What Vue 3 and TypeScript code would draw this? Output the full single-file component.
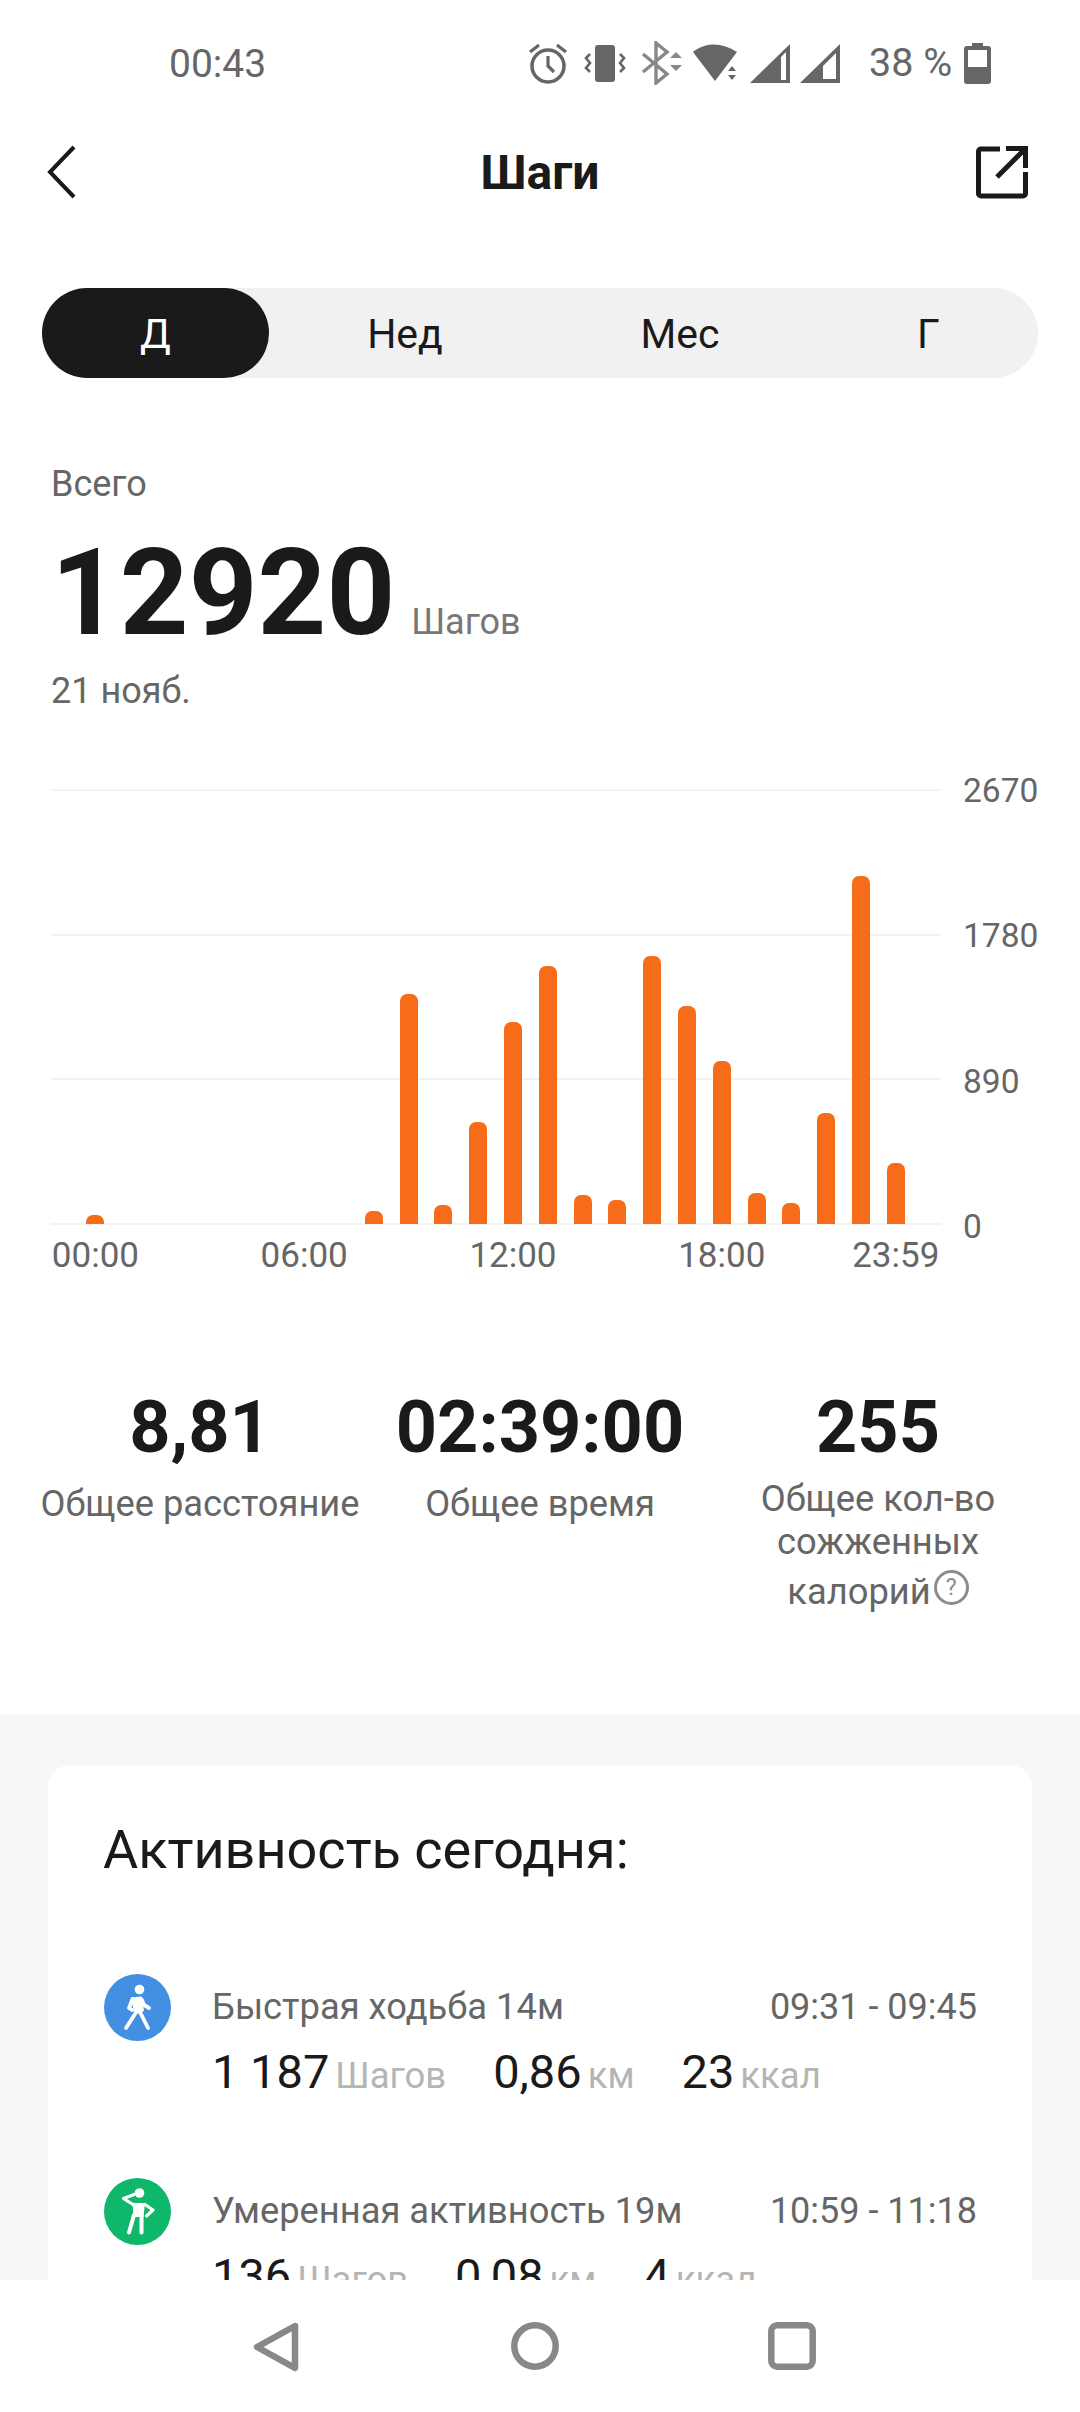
<script setup lang="ts">
interface Unit { value: string; unit: string }
interface Activity { title: string; time: string; color: string; kind: string; units: Unit[] }

const tabs: string[] = ['Д', 'Нед', 'Мес', 'Г']
const tops: Record<number, number> = { 0: 1216, 8: 1212, 9: 995, 10: 1206, 11: 1123, 12: 1023, 13: 967, 14: 1196, 15: 1201, 16: 957, 17: 1007, 18: 1062, 19: 1194, 20: 1204, 21: 1114, 22: 877, 23: 1164 }
const bars: number[] = Array.from({ length: 24 }, (_, i) => (tops[i] ? 1225 - tops[i] : 0))
const yLabels: string[] = ['2670', '1780', '890', '0']
const xLabels: { text: string; hour: number }[] = [
  { text: '00:00', hour: 0 },
  { text: '06:00', hour: 6 },
  { text: '12:00', hour: 12 },
  { text: '18:00', hour: 18 },
  { text: '23:59', hour: 23 },
]
const activities: Activity[] = [
  { title: 'Быстрая ходьба 14м', time: '09:31 - 09:45', color: '#4390e3', kind: 'walk', units: [{ value: '1 187', unit: 'Шагов' }, { value: '0,86', unit: 'км' }, { value: '23', unit: 'ккал' }] },
  { title: 'Умеренная активность 19м', time: '10:59 - 11:18', color: '#0fb76b', kind: 'stand', units: [{ value: '136', unit: 'Шагов' }, { value: '0,08', unit: 'км' }, { value: '4', unit: 'ккал' }] },
]
</script>

<template>
  <div class="phone">
    <div class="status">
      <span class="clock">00:43</span>
      <div class="status-icons">
        <svg width="42" height="44" viewBox="0 0 42 44" class="ic-alarm"><circle cx="21" cy="25" r="16" fill="none" stroke="#666" stroke-width="3.5"/><path d="M21 15v10l6 6M3 11l9-7M39 11l-9-7" fill="none" stroke="#666" stroke-width="3.2"/></svg>
        <svg width="42" height="40" viewBox="0 0 42 40" class="ic-vib"><rect x="11" y="2" width="20" height="37" rx="3" fill="#666"/><path d="M6 11 2 15l4 5-4 5 4 4M36 11l4 4-4 5 4 5-4 4" fill="none" stroke="#666" stroke-width="2.6"/></svg>
        <svg width="42" height="44" viewBox="0 0 42 44" class="ic-bt"><path d="M2 13l24 20-11 9V2l11 9L2 31" fill="none" stroke="#888" stroke-width="3.4"/><path d="M29 17l6-6 6 6zM29 24l6 6 6-6z" fill="#888"/></svg>
        <svg width="48" height="40" viewBox="0 0 48 40" class="ic-wifi"><path d="M1 9C13-1 30-1 45 9L23 38z" fill="#666"/><path d="M36 28l4-5 4 5zM36 32l4 5 4-5z" fill="#666"/></svg>
        <svg width="40" height="40" viewBox="0 0 40 40" class="ic-sig"><path d="M0 40 40 1v39z" fill="#666"/><path d="M31 14l5-5v28h-5z" fill="#fff"/></svg>
        <svg width="40" height="40" viewBox="0 0 40 40" class="ic-sig2"><path d="M0 40 40 1v39z" fill="#666"/><path d="M23 23l13-13v26H23z" fill="#fff"/></svg>
        <span class="pct">38 %</span>
        <svg width="27" height="41" viewBox="0 0 27 41" class="ic-bat"><path d="M8 0h11v3h5a3 3 0 0 1 3 3v32a3 3 0 0 1-3 3H3a3 3 0 0 1-3-3V6a3 3 0 0 1 3-3h5z" fill="#666"/><rect x="4" y="7" width="19" height="17" fill="#fff"/></svg>
      </div>
    </div>

    <div class="main">
      <header class="header">
        <svg width="30" height="54" viewBox="0 0 30 54"><path d="M27 2 3 27l24 25" fill="none" stroke="#1a1a1a" stroke-width="4"/></svg>
        <h1 class="title">Шаги</h1>
        <svg width="52" height="54" viewBox="0 0 52 54"><path d="M24 4H5a2.500 2.500 0 0 0-2.500 2.500v42a2.500 2.500 0 0 0 2.500 2.500h42a2.500 2.500 0 0 0 2.500-2.500V27" fill="none" stroke="#1a1a1a" stroke-width="5"/><path d="M21 32 48 5M30 3.500h19.500V23" fill="none" stroke="#1a1a1a" stroke-width="5"/></svg>
      </header>

      <div class="tabs">
        <div v-for="(t, i) in tabs" :key="t" class="tab" :class="{ active: i === 0 }">{{ t }}</div>
      </div>

      <section class="summary">
        <div class="total-label">Всего</div>
        <div class="total-row"><span class="total">12920</span><span class="total-unit">Шагов</span></div>
        <div class="date">21 нояб.</div>
      </section>

      <section class="chart">
        <div class="plot-row">
          <div class="plot">
            <div class="grid-lines"><i v-for="l in yLabels" :key="l"></i></div>
            <div class="bars">
              <div v-for="(h, i) in bars" :key="i" class="col">
                <div v-if="h" class="bar" :style="{ height: h + 'px' }"></div>
              </div>
            </div>
          </div>
          <div class="y-axis"><span v-for="l in yLabels" :key="l">{{ l }}</span></div>
        </div>
        <div class="x-axis"><span v-for="l in xLabels" :key="l.text" :style="{ gridColumn: l.hour + 1 }">{{ l.text }}</span></div>
      </section>

      <section class="stats">
        <div class="stat"><div class="num">8,81</div><div class="lbl">Общее расстояние</div></div>
        <div class="stat"><div class="num">02:39:00</div><div class="lbl">Общее время</div></div>
        <div class="stat">
          <div class="num">255</div>
          <div class="lbl tall">Общее кол-во сожженных калорий<span class="help">?</span></div>
        </div>
      </section>

      <section class="gray">
        <div class="card">
          <h2 class="card-title">Активность сегодня:</h2>
          <div v-for="a in activities" :key="a.title" class="activity">
            <div class="dot" :style="{ background: a.color }">
              <svg v-if="a.kind === 'walk'" width="67" height="67" viewBox="0 0 67 67"><circle cx="35.500" cy="15.500" r="4.800" fill="#fff"/><path d="M27 23.500 38 22.500 40 37 30.500 41z" fill="#fff"/><path d="M31 40 22 54M36 38l8 16M28.500 25l-3.500 9 3 2M38 26l2 5 5 3" fill="none" stroke="#fff" stroke-width="3.800" stroke-linecap="round" stroke-linejoin="round"/></svg>
              <svg v-else width="67" height="67" viewBox="0 0 67 67"><circle cx="35.500" cy="15" r="4.800" fill="#fff"/><path d="M29 26.500 19.500 20.500 30 16.500M41 26.500l8 5.500-6.500 6" fill="none" stroke="#fff" stroke-width="3.200" stroke-linecap="round" stroke-linejoin="round"/><path d="M28.500 25h12.500l-1.500 14H29.500z" fill="#fff"/><path d="M30 37l-5 17.500M37.500 37v17.500" fill="none" stroke="#fff" stroke-width="4" stroke-linecap="round"/></svg>
            </div>
            <div class="info">
              <div class="line1"><span class="a-title">{{ a.title }}</span><span class="a-time">{{ a.time }}</span></div>
              <div class="line2">
                <span v-for="u in a.units" :key="u.unit" class="pair"><b>{{ u.value }}</b><em>{{ u.unit }}</em></span>
              </div>
            </div>
          </div>
        </div>
      </section>
    </div>

    <nav class="nav">
      <svg width="46" height="50" viewBox="0 0 46 50"><path d="M42 4 4 25l38 21z" fill="none" stroke="#888" stroke-width="6.500" stroke-linejoin="round"/></svg>
      <svg width="48" height="48" viewBox="0 0 48 48"><circle cx="24" cy="24" r="20.700" fill="none" stroke="#888" stroke-width="6.500"/></svg>
      <svg width="48" height="48" viewBox="0 0 48 48"><rect x="3.300" y="3.300" width="41.400" height="41.400" rx="6" fill="none" stroke="#888" stroke-width="6.500"/></svg>
    </nav>
  </div>
</template>

<style scoped>
.phone { width: 1080px; height: 2412px; display: flex; flex-direction: column; background: #fff; font-family: Roboto, "Noto Sans", sans-serif; overflow: hidden; color: #1a1a1a; }
.status { height: 128px; flex: none; display: flex; align-items: center; padding: 0 0 0 169px; color: #666; box-sizing: border-box; }
.clock { font-size: 39px; width: 358px; }
.status-icons { display: flex; align-items: center; height: 44px; margin-top: -2px; }
.status-icons svg { flex: none; }
.ic-vib { margin-left: 15px; }
.ic-bt { margin-left: 15px; }
.ic-wifi { margin-left: 9px; }
.ic-sig { margin-left: 10px; }
.ic-sig2 { margin-left: 10px; }
.pct { font-size: 39.500px; margin-left: 29px; white-space: nowrap; line-height: 44px; }
.ic-bat { margin-left: 12px; }

.main { flex: 1; min-height: 0; overflow: hidden; }
.header { height: 88px; display: flex; align-items: center; justify-content: space-between; padding: 0 52px 0 47px; position: relative; }
.title { position: absolute; left: 0; right: 0; text-align: center; margin: 0; font-size: 48px; font-weight: 700; }
.tabs { margin: 72px 42px 0; height: 90px; width: 996px; border-radius: 45px; background: #f1f1f1; display: grid; grid-template-columns: 227px 272px 278px 219px; }
.tab { display: flex; align-items: center; justify-content: center; font-size: 41px; color: #1a1a1a; border-radius: 45px; padding-top: 2px; box-sizing: border-box; }
.tab.active { background: #1a1a1a; color: #fff; }

.summary { padding: 86px 0 0 51px; }
.total-label { font-size: 36px; line-height: 40px; color: #666; }
.total-row { display: flex; align-items: baseline; margin-top: 24px; height: 130px; line-height: 130px; }
.total { font-size: 120px; font-weight: 700; }
.total-unit { font-size: 36px; color: #777; margin-left: 16px; }
.date { font-size: 36px; line-height: 40px; color: #666; margin-top: 13px; }

.chart { margin-top: 78px; padding-left: 51px; }
.plot-row { display: flex; align-items: stretch; height: 436px; }
.plot { width: 890px; position: relative; height: 436px; }
.grid-lines { position: absolute; inset: 0; display: flex; flex-direction: column; justify-content: space-between; }
.grid-lines i { display: block; height: 2px; background: #f3f3f3; }
.bars { position: absolute; left: 27px; top: 0; width: 835.200px; height: 435px; display: flex; align-items: flex-end; }
.col { flex: 1; display: flex; justify-content: center; align-items: flex-end; }
.bar { width: 18px; background: #f76c18; border-radius: 7px 7px 0 0; }
.y-axis { display: flex; flex-direction: column; justify-content: space-between; margin: -18px 0 -22px 22px; font-size: 33.500px; line-height: 40px; color: #666; }
.x-axis { margin: 11px 0 0 27px; display: grid; grid-template-columns: repeat(24, 34.800px); grid-template-rows: 40px; font-size: 35px; line-height: 40px; color: #666; }
.x-axis span { grid-row: 1; justify-self: center; white-space: nowrap; }

.stats { display: grid; grid-template-columns: 318px 362px 314px; padding: 0 0 0 41px; margin-top: 110px; height: 328px; text-align: center; }
.stat { display: flex; flex-direction: column; align-items: center; }
.num { font-size: 72px; font-weight: 700; line-height: 84px; }
.lbl { font-size: 36.300px; line-height: 43px; color: #666; margin-top: 12px; white-space: nowrap; }
.lbl.tall { white-space: normal; width: 270px; margin-top: 7px; }
.help { display: inline-block; box-sizing: border-box; width: 35px; height: 35px; line-height: 30px; margin: 7px 0 0 3px; border: 3px solid #8c8c8c; border-radius: 50%; font-size: 23px; color: #8c8c8c; text-align: center; vertical-align: 9px; }

.gray { background: #f7f7f7; padding: 51px 48px 0; height: 700px; }
.card { background: #fff; border-radius: 22px 22px 0 0; height: 700px; padding: 52px 55px 0; box-sizing: border-box; }
.card-title { font-size: 54px; font-weight: 400; margin: 0; line-height: 66px; }
.activity { display: flex; height: 204px; }
.card-title + .activity { margin-top: 91px; }
.dot { flex: none; width: 67px; height: 67px; border-radius: 50%; margin-left: 1px; }
.dot svg { display: block; }
.info { margin-left: 41px; width: 766px; }
.line1 { display: flex; justify-content: space-between; font-size: 36.300px; line-height: 44px; color: #666; margin-top: 11px; }
.a-time { font-size: 36px; }
.line2 { display: flex; gap: 47px; margin-top: 13px; align-items: baseline; height: 60px; line-height: 60px; }
.pair { display: flex; align-items: baseline; gap: 6px; }
.pair b { font-size: 47px; font-weight: 400; color: #1a1a1a; }
.pair em { font-style: normal; font-size: 36.500px; color: #b5b5b5; }

.nav { flex: none; height: 132px; background: #fff; display: grid; grid-template-columns: 48px 48px 48px; column-gap: 209.500px; padding: 42px 0 0 253px; box-sizing: border-box; align-items: start; }
</style>

<style>
html, body { margin: 0; background: #fff; }
</style>
